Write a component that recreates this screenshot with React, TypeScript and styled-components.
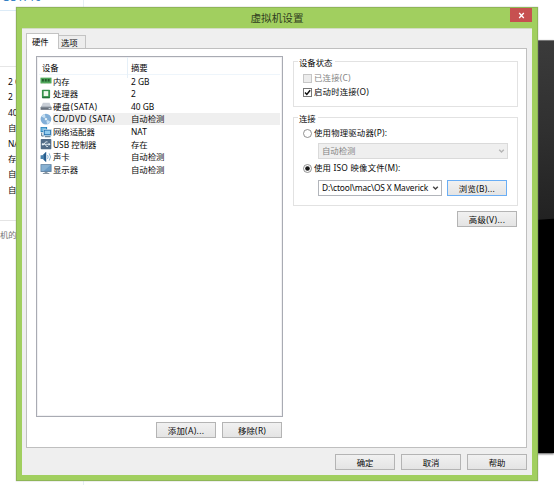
import React from 'react';
import styled, { createGlobalStyle, css } from 'styled-components';

const Global = createGlobalStyle`
  * { box-sizing: border-box; }
  html, body { margin: 0; padding: 0; background: #fff; overflow: hidden; }
  body { font: 8.4px/12px "Noto Sans", "Noto Sans CJK SC", sans-serif; color: #080808; }
`;

const Desktop = styled.div`
  position: relative;
  width: 554px;
  height: 485px;
  overflow: hidden;
  background: #fff;
`;

const Page = styled.div`
  display: flex;
  justify-content: space-between;
  height: 485px;
`;

const Summary = styled.div`
  width: 84px;
  height: 485px;
  border-right: 1px solid #e6eff4;
  white-space: nowrap;
`;

const PageTitle = styled.div`
  height: 10px;
  width: 84px;
  padding-left: 2px;
  overflow: hidden;
  color: #2a78c2;
  font-size: 11px;
  line-height: 12px;
  & > span { display: block; margin-top: -9px; }
`;

const SummaryBlock = styled.div`
  height: 57px;
  border-top: 1px solid #dcebf7;
  border-bottom: 1px solid #e6e6e6;
`;

const SummaryList = styled.div`
  height: 154px;
  padding: 7px 0 0 8px;
  border-bottom: 1px solid #e4e4e4;
`;

const SummaryValue = styled.div`
  height: 15.4px;
  line-height: 15.4px;
`;

const SummaryNote = styled.div`
  padding-top: 8px;
  color: #777;
`;

const Screen = styled.div`
  width: 18px;
  height: 413px;
  margin-top: 40px;
  border-top: 1px solid #777;
  background: linear-gradient(176deg, #3b3b3b 0, #303030 90px, #222 178px, #000 179px);
  box-shadow: 0 1px 2px #555;
`;

const Dialog = styled.div`
  position: absolute;
  left: 16px;
  top: 7px;
  width: 522px;
  height: 474px;
  padding: 0 5px 5px;
  border: 1px solid #8fb657;
  background: #a1cf5f;
  box-shadow: 0 0 1px #999;
`;

const TitleBar = styled.div`
  display: grid;
  grid-template-columns: 1fr auto 1fr;
  height: 20px;
`;

const Title = styled.div`
  grid-column: 2;
  font-size: 10.6px;
  line-height: 20px;
  color: #303d20;
`;

const Close = styled.div`
  justify-self: end;
  display: flex;
  align-items: center;
  justify-content: center;
  width: 22px;
  height: 14px;
  background: #c75050;
`;

const Client = styled.div`
  height: 447px;
  padding: 4px 4px 0;
  border-top: 1px solid #d3dcc6;
  background: #efefef;
`;

const Tabs = styled.div`
  display: flex;
  align-items: flex-end;
  height: 15px;
`;

const Tab = styled.div<{ $active?: boolean }>`
  height: 13px;
  width: 27px;
  padding-left: 2px;
  line-height: 14px;
  border: 1px solid #c3c3c3;
  border-left: 0;
  border-bottom: 0;
  background: #ededed;
  ${p => p.$active && css`
    width: 33px;
    height: 16px;
    padding-left: 5px;
    margin-bottom: -1px;
    border-left: 1px solid #c3c3c3;
    background: #fff;
    line-height: 16px;
  `}
`;

const Panel = styled.div`
  display: flex;
  gap: 10px;
  width: 501px;
  height: 400px;
  padding: 7px 8px 0 9px;
  border: 1px solid #bfbfbf;
  background: #fff;
`;

const ListColumn = styled.div`
  width: 247px;
`;

const DeviceList = styled.div`
  height: 361px;
  border: 1px solid #a9abb3;
  box-shadow: inset 0 0 0 1px #f1f1f3;
`;

const ListHead = styled.div`
  display: grid;
  grid-template-columns: 89px 1fr;
  height: 18px;
  margin: 0 2px;
  border-bottom: 1px solid #eef5fb;
  line-height: 21px;
  & > div { padding-left: 3px; }
  & > div:first-child { border-right: 1px solid #e6f0f8; }
`;

const Device = styled.div<{ $selected?: boolean }>`
  display: grid;
  grid-template-columns: 13px 75px 1fr;
  align-items: center;
  height: 12.6px;
  margin: 0 2px 0 3px;
  line-height: 12.6px;
  white-space: nowrap;
  & > div { height: 12.6px; padding-top: 0.6px; background: ${p => (p.$selected ? '#efefef' : 'none')}; }
  & > div:last-child { padding-left: 3px; }
  & > svg { display: block; }
`;

const Text = styled.span<{ $spacing?: number }>`
  letter-spacing: ${p => p.$spacing ?? 0}px;
  white-space: pre;
`;

const Buttons = styled.div<{ $top: number; $right?: number }>`
  display: flex;
  justify-content: flex-end;
  gap: 6px;
  margin: ${p => p.$top}px ${p => p.$right ?? 0}px 0 0;
`;

const Button = styled.div<{ $focus?: boolean }>`
  flex: none;
  width: 60px;
  height: 16px;
  border: 1px solid ${p => (p.$focus ? '#6aaef5' : '#b4b4b4')};
  background: linear-gradient(#f1f1f1, #e4e4e4);
  text-align: center;
  line-height: 15px;
  white-space: nowrap;
`;

const Options = styled.div`
  width: 225px;
`;

const Group = styled.div<{ $height: number; $top: number }>`
  height: ${p => p.$height}px;
  margin-top: ${p => p.$top}px;
  padding-left: 9px;
  border: 1px solid #e2e2e2;
`;

const Legend = styled.div`
  width: max-content;
  height: 12px;
  margin: -6px 0 0 -5px;
  padding: 0 2px 0 1px;
  background: #fff;
  line-height: 13px;
`;

const Choice = styled.div<{ $top: number; $disabled?: boolean }>`
  display: flex;
  align-items: center;
  gap: 2px;
  height: 12px;
  margin-top: ${p => p.$top}px;
  color: ${p => (p.$disabled ? '#858585' : 'inherit')};
  white-space: nowrap;
`;

const FieldRow = styled.div<{ $top: number }>`
  display: flex;
  gap: 5px;
  margin: ${p => p.$top}px 0 0 15px;
`;

const Combo = styled.div<{ $width: number; $disabled?: boolean }>`
  display: flex;
  justify-content: space-between;
  align-items: center;
  width: ${p => p.$width}px;
  height: 16px;
  padding: 0 2px 0 3px;
  border: 1px solid ${p => (p.$disabled ? '#dadada' : '#b2b5bb')};
  background: ${p => (p.$disabled ? '#efefef' : '#fff')};
  color: ${p => (p.$disabled ? '#858585' : 'inherit')};
  white-space: nowrap;
`;

const Chevron = ({ color }: { color: string }) => (
  <svg width="7" height="6" viewBox="0 0 7 6"><path d="M1.2 1.8 3.5 4.1 5.8 1.8" fill="none" stroke={color} strokeWidth="1.4" /></svg>
);

const Check = ({ checked }: { checked?: boolean }) => (
  <svg width="9" height="9" viewBox="0 0 9 9">
    <rect x=".5" y=".5" width="8" height="8" fill={checked ? '#fff' : '#ececec'} stroke={checked ? '#777' : '#c6c6c6'} />
    {checked && <path d="M2 4.5 3.8 6.4 7.2 2.2" fill="none" stroke="#111" strokeWidth="1.5" />}
  </svg>
);

const Radio = ({ checked }: { checked?: boolean }) => (
  <svg width="9" height="9" viewBox="0 0 9 9">
    <circle cx="4.5" cy="4.5" r="4" fill="#fff" stroke="#777" strokeWidth=".8" />
    {checked && <circle cx="4.5" cy="4.5" r="2.3" fill="#151515" />}
  </svg>
);

const art: Record<string, React.ReactNode> = {
  memory: <>
    <path d="M.5 2.5H12v6H.5z" fill="#4ba657" />
    <path d="M2 4h2v2.5H2zM5 4h2v2.5H5zM8 4h2v2.5H8z" fill="#235b2e" />
    <path d="M1 8.5h10" stroke="#a9c9a5" strokeDasharray="1 .5" />
  </>,
  cpu: <>
    <rect x="2" y="1.5" width="8.5" height="9" rx=".8" fill="#34914b" />
    <rect x="3.8" y="3" width="4.8" height="5.2" fill="#eef8ec" />
    <path d="M2.5 9.8H10" stroke="#1f6c36" />
  </>,
  disk: <>
    <path d="M3 2.5h7l2 5.3H.7z" fill="#c8ced6" />
    <path d="M.6 7h11.4v3H.6z" fill="#68717d" />
    <path d="M1 7h10.6" stroke="#9aa4af" />
    <path d="M9 8.7h2" stroke="#d9e6ee" />
  </>,
  disc: <>
    <circle cx="6.2" cy="6.1" r="5.6" fill="#82afd8" />
    <path d="M6.2 6.1 1.5 3.4A5.4 5.4 0 0 1 5 .9zM6.2 6.1l4.7 2.7A5.4 5.4 0 0 1 7.4 11.3z" fill="#c7e0f2" />
    <circle cx="6.2" cy="6.1" r="1.7" fill="#e7f2f9" stroke="#699bc7" strokeWidth=".5" />
  </>,
  network: <>
    <path d="M.6 .8h6.8v5.4H.6z" fill="#277eb7" />
    <path d="M1.4 1.5h5v3.6h-5z" fill="#73b9df" />
    <path d="M3.6 3.4h8.2v6.4H3.6z" fill="#246fae" stroke="#d7eaf5" strokeWidth=".6" />
    <path d="M4.9 4.5h5.6v3.8H4.9z" fill="#91cbed" />
    <path d="M5 10.9h6M1.8 6.8v3.4h2" fill="none" stroke="#44657d" />
  </>,
  usb: <>
    <rect x=".8" y=".8" width="11" height="10.6" rx=".8" fill="#526b86" />
    <path d="M2.5 6.3h7.2M4.2 6.2l1.7-2.4h2M5.6 6.4l1.2 2.2h1.5" fill="none" stroke="#edf4f8" strokeWidth=".9" />
    <circle cx="3" cy="6.3" r="1.2" fill="#edf4f8" />
    <path d="m9 4.8 2 1.5-2 1.4z" fill="#edf4f8" />
  </>,
  sound: <>
    <path d="M.6 4.2h2L6.4.6v10.6L2.8 8H.6z" fill="#4a82ad" />
    <path d="M4 3.3 6.4.8v10.4L4.3 9z" fill="#285d8d" />
    <path d="M7.8 4q1.5 2 0 4M9.6 2.2q2.7 3.8 0 7.6" fill="none" stroke="#73a8cf" strokeWidth=".9" />
  </>,
  display: <>
    <path d="M.6 1H12v8H.6z" fill="#52789b" />
    <path d="M1.4 1.8h9.8v6.2H1.4z" fill="#6b9cc6" />
    <path d="M1.4 1.8H11L4 8H1.4z" fill="#88b1d2" />
    <path d="M4.8 9h3v1.2h1.9v1H3v-1h1.8z" fill="#8997a3" />
  </>,
};

const DeviceIcon = ({ kind }: { kind: string }) => (
  <svg width="12" height="12" viewBox="0 0 12.5 12">{art[kind]}</svg>
);

const devices: { kind: string; name: string; value: string; spacing?: number }[] = [
  { kind: 'memory', name: '内存', value: '2 GB' },
  { kind: 'cpu', name: '处理器', value: '2' },
  { kind: 'disk', name: '硬盘(SATA)', value: '40 GB', spacing: 0.5 },
  { kind: 'disc', name: 'CD/DVD (SATA)', value: '自动检测', spacing: 0.35 },
  { kind: 'network', name: '网络适配器', value: 'NAT' },
  { kind: 'usb', name: 'USB 控制器', value: '存在' },
  { kind: 'sound', name: '声卡', value: '自动检测' },
  { kind: 'display', name: '显示器', value: '自动检测' },
];

const summary = ['2 GB', '2', '40 GB', '自动检测', 'NAT', '存在', '自动检测', '自动检测'];

export default function App() {
  return (
    <Desktop>
      <Global />
      <Page>
        <Summary>
          <PageTitle><span>OS X 10</span></PageTitle>
          <SummaryBlock />
          <SummaryList>{summary.map((s, i) => <SummaryValue key={i}>{s}</SummaryValue>)}</SummaryList>
          <SummaryNote>机的</SummaryNote>
        </Summary>
        <Screen />
      </Page>
      <Dialog>
        <TitleBar>
          <Title>虚拟机设置</Title>
          <Close>
            <svg width="7" height="7" viewBox="0 0 7 7"><path d="m1.2 1 4.6 5M5.8 1 1.2 6" stroke="#fff" strokeWidth="1.3" /></svg>
          </Close>
        </TitleBar>
        <Client>
          <Tabs>
            <Tab $active>硬件</Tab>
            <Tab>选项</Tab>
          </Tabs>
          <Panel>
            <ListColumn>
              <DeviceList>
                <ListHead><div>设备</div><div>摘要</div></ListHead>
                {devices.map(d => (
                  <Device key={d.kind} $selected={d.kind === 'disc'}>
                    <DeviceIcon kind={d.kind} />
                    <div><Text $spacing={d.spacing}>{d.name}</Text></div>
                    <div><Text>{d.value}</Text></div>
                  </Device>
                ))}
              </DeviceList>
              <Buttons $top={5} $right={1}>
                <Button><Text $spacing={0.35}>添加(A)...</Text></Button>
                <Button><Text $spacing={0.25}>移除(R)</Text></Button>
              </Buttons>
            </ListColumn>
            <Options>
              <Group $height={46} $top={5}>
                <Legend>设备状态</Legend>
                <Choice $top={4} $disabled><Check /><Text $spacing={0.2}>已连接(C)</Text></Choice>
                <Choice $top={2}><Check checked /><Text $spacing={0.2}>启动时连接(O)</Text></Choice>
              </Group>
              <Group $height={89} $top={10}>
                <Legend>连接</Legend>
                <Choice $top={3}><Radio /><Text $spacing={0.2}>使用物理驱动器(P):</Text></Choice>
                <FieldRow $top={4}>
                  <Combo $width={190} $disabled><Text>自动检测</Text><Chevron color="#b5b5b5" /></Combo>
                </FieldRow>
                <Choice $top={3}><Radio checked /><Text $spacing={0.2}>使用 ISO 映像文件(M):</Text></Choice>
                <FieldRow $top={6}>
                  <Combo $width={124}><Text $spacing={-0.13}>D:\ctool\mac\OS X Maverick</Text><Chevron color="#444" /></Combo>
                  <Button $focus><Text $spacing={0.3}>浏览(B)...</Text></Button>
                </FieldRow>
              </Group>
              <Buttons $top={5} $right={1}><Button><Text $spacing={0.4}>高级(V)...</Text></Button></Buttons>
            </Options>
          </Panel>
          <Buttons $top={6} $right={1}>
            <Button>确定</Button>
            <Button>取消</Button>
            <Button>帮助</Button>
          </Buttons>
        </Client>
      </Dialog>
    </Desktop>
  );
}
